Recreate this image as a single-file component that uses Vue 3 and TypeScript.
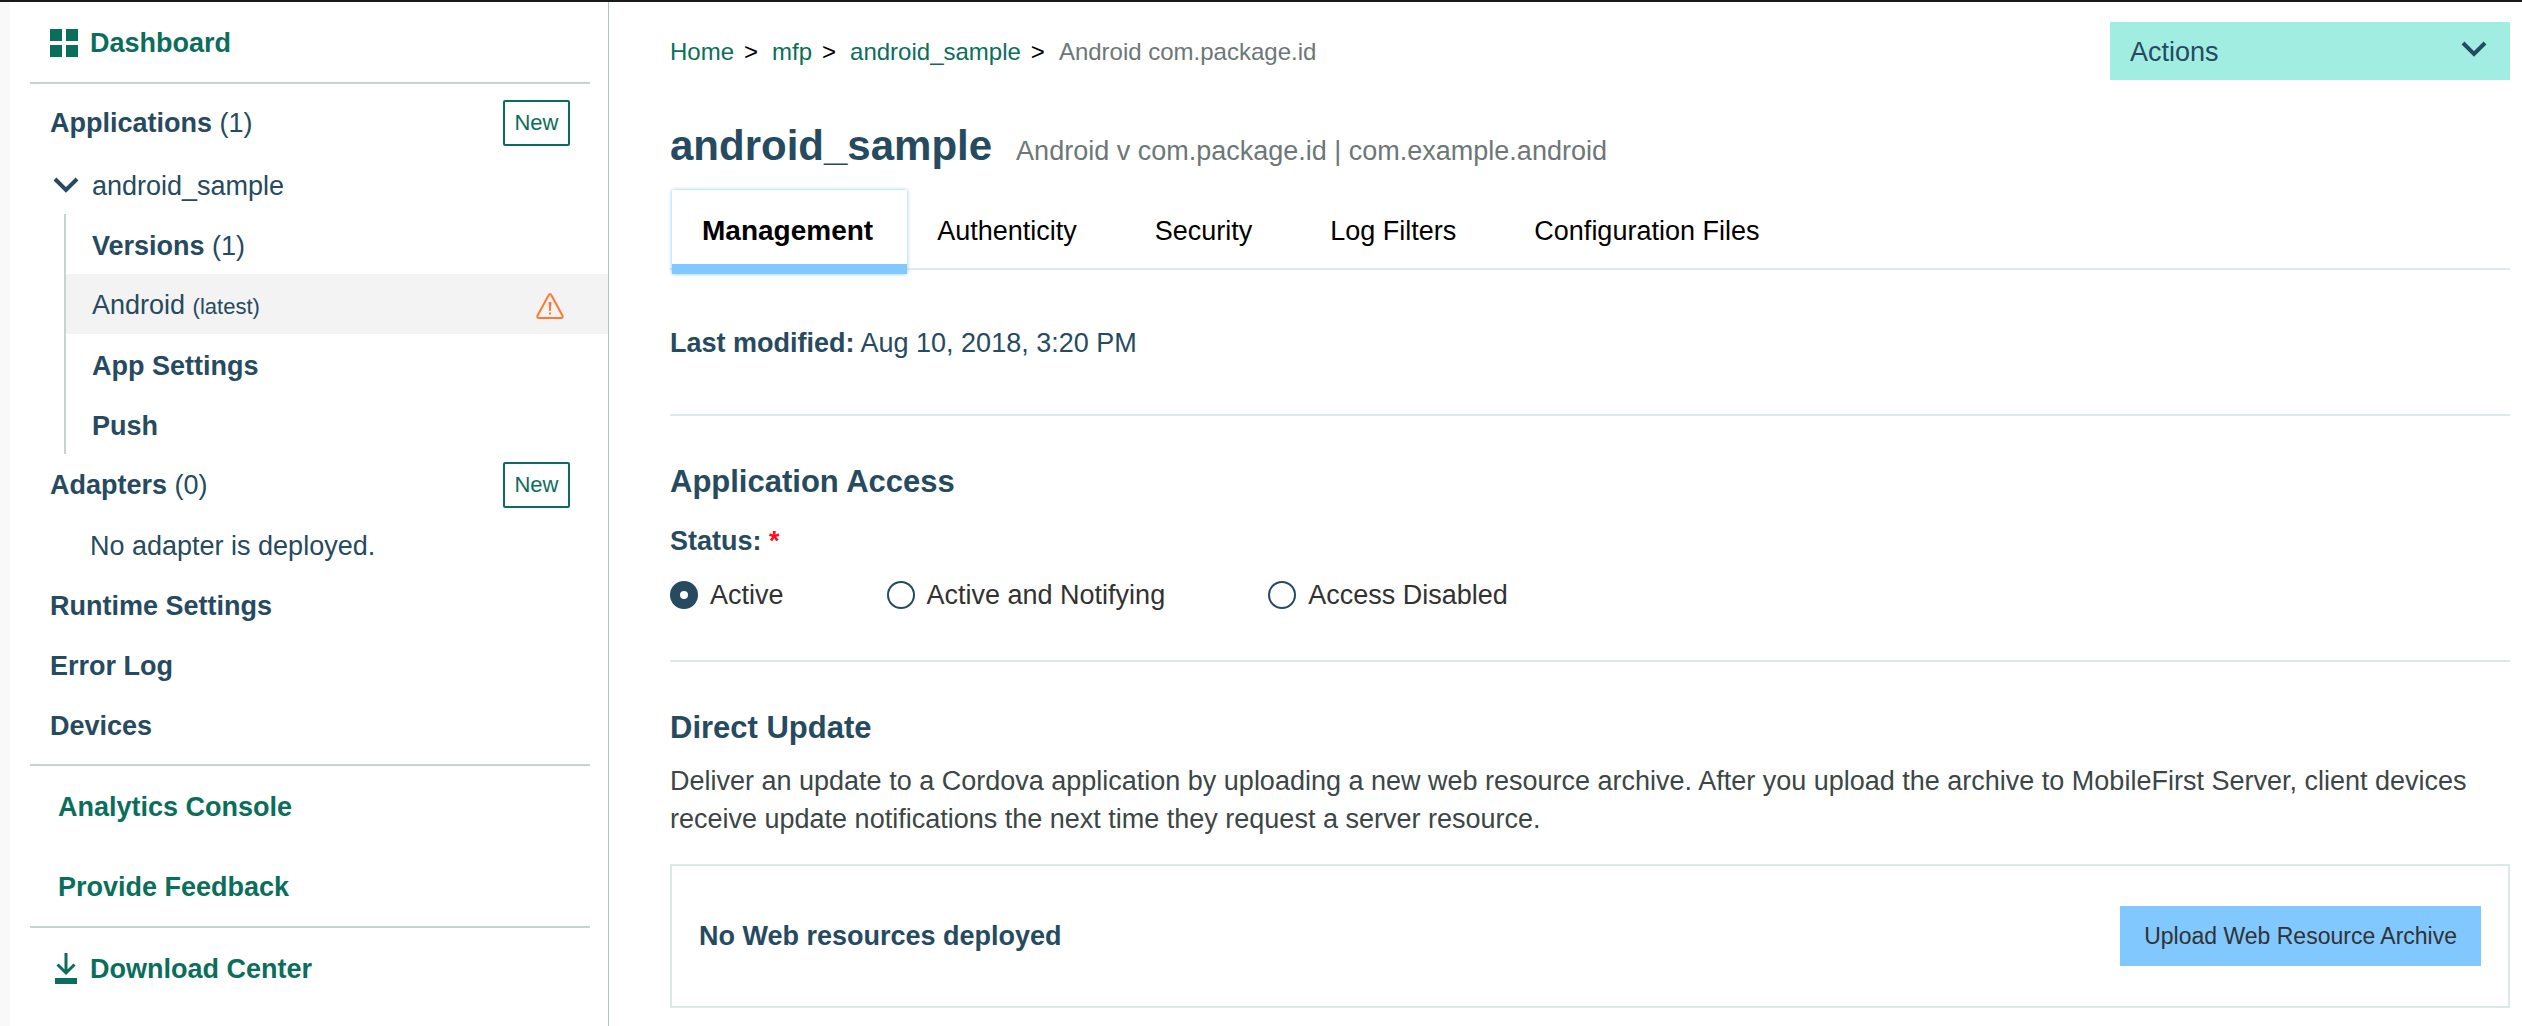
<script setup lang="ts">
import { ref } from 'vue'

const tabs: string[] = ['Management', 'Authenticity', 'Security', 'Log Filters', 'Configuration Files']
const activeTab = ref('Management')

const statuses: string[] = ['Active', 'Active and Notifying', 'Access Disabled']
const status = ref('Active')
const action = ref('')

const crumbs: string[] = ['Home', 'mfp', 'android_sample']
</script>

<template>
  <div class="app">
    <nav class="sidebar" aria-label="Console">
      <a href="#" class="row strong green tall">
        <svg class="icon grid-icon" viewBox="0 0 28 28" aria-hidden="true">
          <path d="M0 0h12v12H0zM16 0h12v12H16zM0 16h12v12H0zM16 16h12v12H16z" fill="currentColor" />
        </svg>
        Dashboard
      </a>
      <hr />
      <div class="row apps">
        <a href="#"><b>Applications</b> (1)</a>
        <button type="button" class="new">New</button>
      </div>
      <a href="#" class="row app-name">
        <svg class="icon chevron" viewBox="0 0 32 28" aria-hidden="true">
          <path d="M5 7l11 11L27 7" fill="none" stroke="currentColor" stroke-width="4" />
        </svg>
        android_sample
      </a>
      <div class="tree">
        <a href="#" class="leaf"><span><b>Versions</b> (1)</span></a>
        <a href="#" class="leaf current">
          <span>Android <small>(latest)</small></span>
          <svg class="warning" viewBox="0 0 28 28" aria-label="Warning" role="img">
            <path d="M12.6 3.2Q14 1 15.4 3.2L26.4 23.4Q27.4 26 25 26H3Q.6 26 1.6 23.4Z" fill="none" stroke="currentColor" stroke-width="2" />
            <path d="M12.6 10h2.8l-.6 9h-1.6zM13 20.500h2v2h-2z" fill="currentColor" />
          </svg>
        </a>
        <a href="#" class="leaf strong">App Settings</a>
        <a href="#" class="leaf strong">Push</a>
      </div>
      <div class="row adapters">
        <a href="#"><b>Adapters</b> (0)</a>
        <button type="button" class="new">New</button>
      </div>
      <p class="row empty">No adapter is deployed.</p>
      <a href="#" class="row strong">Runtime Settings</a>
      <a href="#" class="row strong">Error Log</a>
      <a href="#" class="row strong last">Devices</a>
      <hr />
      <a href="#" class="row strong green tall inset">Analytics Console</a>
      <a href="#" class="row strong green tall inset">Provide Feedback</a>
      <hr />
      <a href="#" class="row strong green tall">
        <svg class="icon download" viewBox="0 0 32 32" aria-hidden="true">
          <path d="M16 0v20M7.500 11.500L16 20l8.500-8.500" fill="none" stroke="currentColor" stroke-width="3" />
          <path d="M5 25h22v6H5z" fill="currentColor" />
        </svg>
        Download Center
      </a>
    </nav>

    <main class="main">
      <header class="top">
        <nav class="crumbs" aria-label="Breadcrumb">
          <template v-for="crumb in crumbs" :key="crumb">
            <a href="#">{{ crumb }}</a><span class="sep">&gt;</span>
          </template>
          <span class="here">Android com.package.id</span>
        </nav>
        <div class="actions">
          <select v-model="action" aria-label="Actions">
            <option value="">Actions</option>
          </select>
          <svg viewBox="0 0 32 28" aria-hidden="true">
            <path d="M5 7l11 11L27 7" fill="none" stroke="currentColor" stroke-width="4" />
          </svg>
        </div>
      </header>

      <div class="title">
        <h1>android_sample</h1>
        <span>Android v com.package.id | com.example.android</span>
      </div>

      <div class="tabs" role="tablist">
        <button
          v-for="tab in tabs"
          :key="tab"
          type="button"
          role="tab"
          :aria-selected="tab === activeTab"
          :class="{ active: tab === activeTab }"
          @click="activeTab = tab"
        >{{ tab }}</button>
      </div>

      <p class="modified"><b>Last modified:</b> Aug 10, 2018, 3:20 PM</p>

      <section class="access">
        <h2>Application Access</h2>
        <fieldset>
          <legend>Status: <span class="required">*</span></legend>
          <div class="options">
            <label v-for="option in statuses" :key="option">
              <input v-model="status" type="radio" name="status" :value="option" />
              {{ option }}
            </label>
          </div>
        </fieldset>
      </section>

      <section class="update">
        <h2>Direct Update</h2>
        <p>
          Deliver an update to a Cordova application by uploading a new web resource archive. After you
          upload the archive to MobileFirst Server, client devices receive update notifications the next
          time they request a server resource.
        </p>
        <div class="panel">
          <b>No Web resources deployed</b>
          <button type="button">Upload Web Resource Archive</button>
        </div>
      </section>
    </main>
  </div>
</template>

<style>
body {
  margin: 0;
  background: #fff;
}
</style>

<style scoped>
.app {
  display: grid;
  grid-template-columns: 609px minmax(0, 1fr);
  box-sizing: border-box;
  min-height: 100vh;
  border-top: 2px solid #1a1a1a;
  background: #fff;
  color: #264a60;
  font-family: "Liberation Sans", Arial, sans-serif;
  font-size: 27px;
  line-height: 38px;
}

a {
  color: inherit;
  text-decoration: none;
}

button,
select {
  font: inherit;
  border-radius: 0;
}

h1,
h2,
p {
  margin: 0;
}

.sidebar {
  border-left: 10px solid #f9f9f9;
  border-right: 1px solid #b4bfbf;
}

.sidebar hr {
  margin: 0 18px 0 20px;
  border: 0;
  height: 2px;
  background: #c8d2d2;
}

.row {
  display: flex;
  align-items: center;
  box-sizing: border-box;
  height: 60px;
  padding: 0 38px 0 40px;
}

.strong {
  font-weight: 700;
}

.green {
  color: #0b6e5b;
}

.tall {
  height: 80px;
  padding-top: 2px;
}

.inset {
  padding-left: 48px;
}

.apps {
  height: 76px;
  padding-top: 2px;
  justify-content: space-between;
}

.adapters {
  height: 62px;
  justify-content: space-between;
}

.app-name {
  height: 54px;
  padding-bottom: 2px;
}

.empty {
  padding-left: 80px;
}

.last {
  margin-bottom: 8px;
}

.icon {
  flex: none;
  width: 32px;
  margin-right: 10px;
}

.grid-icon {
  width: 28px;
  height: 28px;
  margin-right: 12px;
}

.chevron {
  height: 28px;
}

.download {
  height: 32px;
  margin-right: 8px;
}

.new {
  width: 67px;
  height: 46px;
  padding: 0;
  border: 2px solid #0b6e5b;
  border-radius: 2px;
  background: #fff;
  color: #0b6e5b;
  font-size: 22px;
}

.tree {
  margin-left: 54px;
  border-left: 2px solid #c8d2d2;
}

.leaf {
  display: flex;
  align-items: center;
  justify-content: space-between;
  box-sizing: border-box;
  height: 60px;
  padding: 4px 44px 0 26px;
}

.leaf small {
  font-size: 22px;
}

.current {
  background: #f3f3f3;
}

.warning {
  width: 28px;
  height: 28px;
  color: #ff7832;
}

.main {
  padding: 20px 12px 18px 61px;
}

.top {
  display: flex;
  align-items: center;
  justify-content: space-between;
}

.crumbs {
  display: flex;
  padding-top: 2px;
  font-size: 24px;
}

.crumbs a {
  color: #0b6e5b;
}

.sep {
  margin: 0 14px 0 10px;
  color: #000;
}

.here {
  color: #6d7777;
}

.actions {
  position: relative;
  width: 400px;
  color: #264a60;
}

.actions select {
  display: block;
  width: 100%;
  height: 58px;
  padding: 2px 20px 0;
  border: 0;
  appearance: none;
  background: #a1ede2;
  color: inherit;
}

.actions svg {
  position: absolute;
  top: 14px;
  right: 20px;
  width: 32px;
  height: 28px;
  pointer-events: none;
}

.title {
  display: flex;
  align-items: baseline;
  gap: 24px;
  margin-top: 40px;
  color: #6d7777;
}

.title h1 {
  color: #264a60;
  font-size: 42px;
  line-height: 52px;
}

.tabs {
  display: flex;
  height: 78px;
  margin-top: 18px;
  border-bottom: 2px solid #dfe8eb;
}

.tabs button {
  height: 84px;
  padding: 0 48px 2px 30px;
  border: 0;
  background: none;
  color: #000;
}

.tabs .active {
  margin-left: 2px;
  padding: 8px 34px 0 30px;
  border-bottom: 10px solid #80c8ff;
  background: #fff;
  box-shadow: 0 0 4px #80c8ff;
  font-size: 28px;
  font-weight: 700;
}

.modified {
  padding: 54px 0 52px;
  border-bottom: 2px solid #dfe8eb;
}

h2 {
  font-size: 31px;
  line-height: 40px;
}

.access {
  padding: 46px 0;
  border-bottom: 2px solid #dfe8e8;
}

fieldset {
  margin: 20px 0 0;
  padding: 0;
  border: 0;
}

legend {
  padding: 0;
  font-weight: 700;
}

.required {
  color: #ff0a1e;
}

.options {
  display: flex;
  gap: 103px;
  margin-top: 16px;
  color: #323232;
}

.options label {
  display: flex;
  align-items: center;
  gap: 12px;
}

.options input {
  box-sizing: border-box;
  width: 28px;
  height: 28px;
  margin: 0;
  border: 2px solid #264a60;
  border-radius: 50%;
  appearance: none;
  background: #fff;
}

.options input:checked {
  border-width: 10px;
}

.update {
  padding-top: 46px;
}

.update p {
  margin-top: 14px;
  color: #3c4646;
}

.panel {
  display: flex;
  align-items: center;
  justify-content: space-between;
  margin-top: 26px;
  padding: 40px 27px;
  border: 2px solid #dfe8e8;
}

.panel button {
  height: 60px;
  padding: 0 24px;
  border: 0;
  background: #80c8ff;
  color: #323232;
  font-size: 23px;
}
</style>
